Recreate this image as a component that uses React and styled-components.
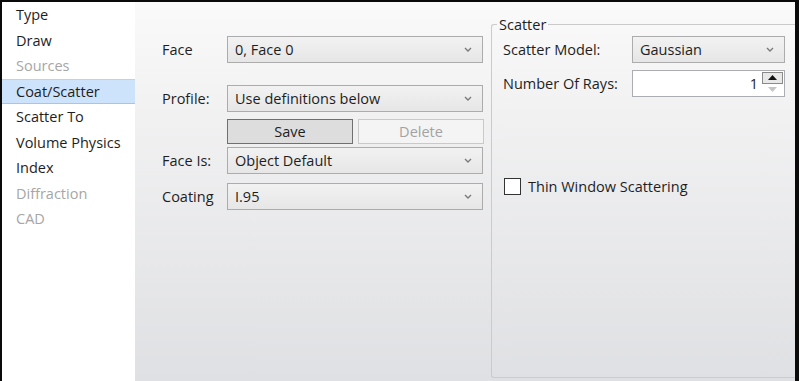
import styled, { createGlobalStyle } from "styled-components";

const GlobalStyle = createGlobalStyle`
  html, body {
    margin: 0;
    padding: 0;
    background: #ffffff;
  }
  body {
    font-family: "Open Sans", "Noto Sans", sans-serif;
    font-size: 14.5px;
    color: #1e1e1e;
  }
`;

const Window = styled.div`
  width: 799px;
  height: 381px;
  box-sizing: border-box;
  border-top: 2px solid #0a0a0a;
  border-left: 2px solid #0a0a0a;
  border-right: 4px solid #0a0a0a;
  display: flex;
  overflow: hidden;
`;

const Sidebar = styled.ul`
  width: 133px;
  flex-shrink: 0;
  margin: 0;
  padding: 0;
  list-style: none;
  background: #ffffff;
`;

const NavItem = styled.li`
  height: 25.5px;
  box-sizing: border-box;
  padding-left: 14px;
  display: flex;
  align-items: center;
  color: ${(p) => (p.$disabled ? "#a6a6a6" : "#1e1e1e")};
  background: ${(p) => (p.$active ? "#cde3fb" : "transparent")};
  border-top: 1px solid ${(p) => (p.$active ? "#b9d4f3" : "transparent")};
  border-bottom: 1px solid ${(p) => (p.$active ? "#a6c5ea" : "transparent")};
  white-space: nowrap;
`;

const Content = styled.div`
  flex: 1;
  display: flex;
  background: linear-gradient(#fafafa, #f1f1f2 30%, #dfe0e3);
`;

const FormColumn = styled.div`
  width: 356px;
  flex-shrink: 0;
  box-sizing: border-box;
  padding: 34px 0 0 27px;
  display: flex;
  flex-direction: column;
`;

const FormRow = styled.div`
  display: flex;
  align-items: center;
  margin-top: ${(p) => p.$gap || 0}px;
`;

const Label = styled.span`
  width: ${(p) => p.$width || 65}px;
  flex-shrink: 0;
  white-space: nowrap;
`;

const Select = styled.div`
  width: ${(p) => p.$width || 256}px;
  height: 27px;
  box-sizing: border-box;
  border: 1px solid #acacac;
  background: linear-gradient(#f2f2f2, #e6e6e6);
  display: flex;
  align-items: center;
  justify-content: space-between;
  padding: 0 10px 0 7px;
`;

const ButtonRow = styled.div`
  display: flex;
  gap: 5px;
  margin-left: 65px;
  margin-top: 7px;
`;

const Button = styled.div`
  width: 126px;
  height: 25px;
  box-sizing: border-box;
  display: flex;
  align-items: center;
  justify-content: center;
  border: 1px solid ${(p) => (p.$disabled ? "#c9c9c9" : "#707070")};
  background: ${(p) => (p.$disabled ? "#f4f4f4" : "#dddddd")};
  color: ${(p) => (p.$disabled ? "#a3a3a3" : "#1e1e1e")};
`;

const GroupBox = styled.fieldset`
  flex: 1;
  margin: 13px 0 3px 0;
  padding: 2px 0 0 11px;
  border: 1px solid #cbcbcb;
  border-right: none;
  border-radius: 3px 0 0 3px;
  display: flex;
  flex-direction: column;
  min-width: 0;
`;

const Legend = styled.legend`
  padding: 0 2px;
  margin-left: -6px;
  line-height: 19px;
`;

const SpinBox = styled.div`
  width: 153px;
  height: 27px;
  box-sizing: border-box;
  border: 1px solid #abadb3;
  background: #ffffff;
  display: flex;
`;

const SpinValue = styled.div`
  flex: 1;
  display: flex;
  align-items: center;
  justify-content: flex-end;
  padding-right: 4px;
`;

const SpinButtons = styled.div`
  width: 22px;
  display: flex;
  flex-direction: column;
  padding: 1px 1px 1px 0;
  box-sizing: border-box;
`;

const SpinButton = styled.div`
  flex: 1;
  display: flex;
  align-items: center;
  justify-content: center;
  box-sizing: border-box;
  border: 1px solid ${(p) => (p.$active ? "#8a8a8a" : "transparent")};
  background: ${(p) => (p.$active ? "#e8e8e8" : "transparent")};
`;

const CheckRow = styled.label`
  display: flex;
  align-items: center;
  gap: 7px;
  margin-top: 80px;
  margin-left: 1px;
`;

const CheckBox = styled.span`
  width: 17px;
  height: 17px;
  box-sizing: border-box;
  border: 1px solid #333333;
  background: #ffffff;
`;

const Chevron = () => (
  <svg width="8" height="5" viewBox="0 0 8 5">
    <polyline points="1,1 4,4 7,1" fill="none" stroke="#7a7a7a" strokeWidth="1.4" />
  </svg>
);

const Triangle = ({ up, color }) => (
  <svg width="9" height="5" viewBox="0 0 9 5">
    <polygon points={up ? "0,5 4.5,0 9,5" : "0,0 4.5,5 9,0"} fill={color} />
  </svg>
);

const navItems = [
  { name: "Type" },
  { name: "Draw" },
  { name: "Sources", disabled: true },
  { name: "Coat/Scatter", active: true },
  { name: "Scatter To" },
  { name: "Volume Physics" },
  { name: "Index" },
  { name: "Diffraction", disabled: true },
  { name: "CAD", disabled: true },
];

const App = () => {
  return (
    <>
      <GlobalStyle />
      <Window>
        <Sidebar>
          {navItems.map((item) => (
            <NavItem key={item.name} $active={item.active} $disabled={item.disabled}>
              {item.name}
            </NavItem>
          ))}
        </Sidebar>
        <Content>
          <FormColumn>
            <FormRow>
              <Label>Face</Label>
              <Select>
                <span>0, Face 0</span>
                <Chevron />
              </Select>
            </FormRow>
            <FormRow $gap={22}>
              <Label>Profile:</Label>
              <Select>
                <span>Use definitions below</span>
                <Chevron />
              </Select>
            </FormRow>
            <ButtonRow>
              <Button>Save</Button>
              <Button $disabled>Delete</Button>
            </ButtonRow>
            <FormRow $gap={3}>
              <Label>Face Is:</Label>
              <Select>
                <span>Object Default</span>
                <Chevron />
              </Select>
            </FormRow>
            <FormRow $gap={9}>
              <Label>Coating</Label>
              <Select>
                <span>I.95</span>
                <Chevron />
              </Select>
            </FormRow>
          </FormColumn>
          <GroupBox>
            <Legend>Scatter</Legend>
            <FormRow>
              <Label $width={129}>Scatter Model:</Label>
              <Select $width={153}>
                <span>Gaussian</span>
                <Chevron />
              </Select>
            </FormRow>
            <FormRow $gap={7}>
              <Label $width={129}>Number Of Rays:</Label>
              <SpinBox>
                <SpinValue>1</SpinValue>
                <SpinButtons>
                  <SpinButton $active>
                    <Triangle up color="#111111" />
                  </SpinButton>
                  <SpinButton>
                    <Triangle color="#c4c4c4" />
                  </SpinButton>
                </SpinButtons>
              </SpinBox>
            </FormRow>
            <CheckRow>
              <CheckBox />
              <span>Thin Window Scattering</span>
            </CheckRow>
          </GroupBox>
        </Content>
      </Window>
    </>
  );
};

export default App;
